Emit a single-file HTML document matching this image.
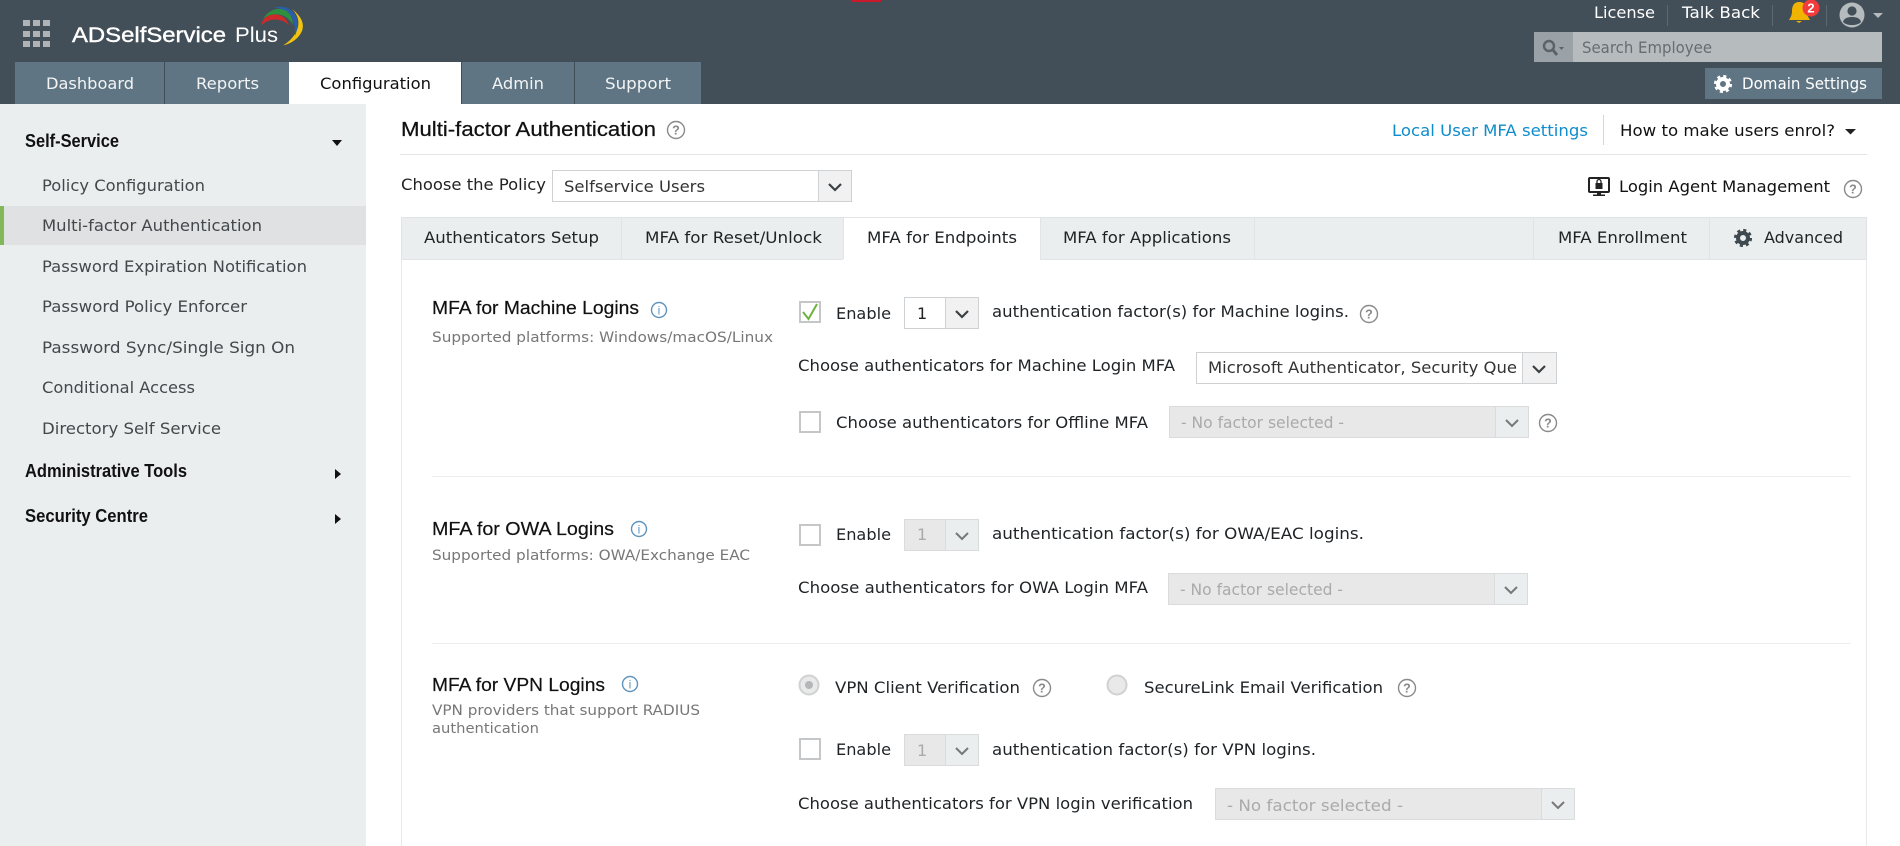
<!DOCTYPE html>
<html lang="en">
<head>
<meta charset="utf-8">
<title>ADSelfService Plus - Multi-factor Authentication</title>
<style>
html,body{margin:0;padding:0;background:#fff;width:1900px;height:846px;overflow:hidden}
svg{display:block}
text{font-family:"DejaVu Sans","Liberation Sans",sans-serif;font-size:16px;fill:#1f2326;white-space:pre}
.w{fill:#fff}
.nav{fill:#f2f4f5;font-size:16px}
.side{fill:#43484c;font-size:16px}
.head{font-family:"Liberation Sans",sans-serif;font-size:18px;font-weight:bold;fill:#111}
.title{font-family:"Liberation Sans",sans-serif;font-size:20.5px;fill:#111;stroke:#111;stroke-width:.25}
.sec{font-family:"Liberation Sans",sans-serif;font-size:18.5px;fill:#111;stroke:#111;stroke-width:.2}
.sub{font-size:14px;fill:#777}
.dis{fill:#aaa}
.lg{font-family:"Liberation Sans",sans-serif;font-size:21px;fill:#fff}
.hp{font-family:"Liberation Sans",sans-serif;font-size:12.5px;font-weight:bold;fill:#888;text-anchor:middle}
.hc{fill:none;stroke:#8a8a8a;stroke-width:1.4}
.ic{fill:none;stroke:#5f94bd;stroke-width:1.4}
.ip{font-family:"Liberation Sans",sans-serif;font-size:12px;fill:#5f94bd;text-anchor:middle}
.chev{fill:none;stroke:#3c4043;stroke-width:2.2}
.chevd{fill:none;stroke:#777;stroke-width:2}
.box{fill:#fff;stroke:#cfd2d4;stroke-width:1}
.arr{fill:#f1f1f1;stroke:#cfd2d4;stroke-width:1}
.dbox{fill:#e8e8e8;stroke:#d9dbdc;stroke-width:1}
.darr{fill:#ebeeee;stroke:#d9dbdc;stroke-width:1}
.cb{fill:#fff;stroke:#c4c6c8;stroke-width:2}
</style>
</head>
<body>
<svg width="1900" height="846" viewBox="0 0 1900 846" xmlns="http://www.w3.org/2000/svg">
<defs>
<g id="gear"><circle r="5" fill="none" stroke="currentColor" stroke-width="4"/><circle r="7.6" fill="none" stroke="currentColor" stroke-width="3" stroke-dasharray="3 2.97"/></g>
</defs>

<!-- header -->
<rect width="1900" height="104" fill="#434f58"/>
<rect x="851" y="0" width="30" height="2" fill="#c8192d"/>
<g fill="#b0b3b5">
<rect x="23" y="20" width="7" height="6"/><rect x="33" y="20" width="7" height="6"/><rect x="43" y="20" width="7" height="6"/>
<rect x="23" y="31" width="7" height="6"/><rect x="33" y="31" width="7" height="6"/><rect x="43" y="31" width="7" height="6"/>
<rect x="23" y="41" width="7" height="6"/><rect x="33" y="41" width="7" height="6"/><rect x="43" y="41" width="7" height="6"/>
</g>
<text class="lg" x="72" y="42" textLength="154" lengthAdjust="spacingAndGlyphs" style="stroke:#fff;stroke-width:.4">ADSelfService</text>
<text class="lg" x="235" y="42" textLength="43" lengthAdjust="spacingAndGlyphs">Plus</text>
<path d="M292 9Q306 20 302 31Q297 42 283 45.500Q295 38 298 27Q300 17 292 9Z" fill="#f1c40f"/>
<path d="M275 7.500Q290 4 297 18Q299 26 295 36Q296 22 289 15Q283 9 275 7.500Z" fill="#2a5ea6"/>
<path d="M263 19Q270 8 281 9Q292 11 293 25Q288 16 279 14.500Q270 13 263 19Z" fill="#2f8f3f"/>
<path d="M261 25.500Q263 16 273 14.500Q284 13.500 289 25Q282 19 274 19.500Q267 20 261 25.500Z" fill="#cf2a2a"/>

<!-- main nav -->
<rect x="15" y="62" width="149" height="42" fill="#5f7583"/>
<rect x="165" y="62" width="124" height="42" fill="#5f7583"/>
<rect x="289" y="62" width="172" height="42" fill="#fff"/>
<rect x="462" y="62" width="112" height="42" fill="#5f7583"/>
<rect x="575" y="62" width="126" height="42" fill="#5f7583"/>
<text class="nav" x="46" y="89" textLength="88" lengthAdjust="spacingAndGlyphs">Dashboard</text>
<text class="nav" x="196" y="89" textLength="63" lengthAdjust="spacingAndGlyphs">Reports</text>
<text class="nav" x="320" y="89" textLength="111" lengthAdjust="spacingAndGlyphs" style="fill:#111">Configuration</text>
<text class="nav" x="492" y="89" textLength="52" lengthAdjust="spacingAndGlyphs">Admin</text>
<text class="nav" x="605" y="89" textLength="66" lengthAdjust="spacingAndGlyphs">Support</text>

<!-- header right -->
<text class="w" x="1594" y="18" textLength="61" lengthAdjust="spacingAndGlyphs">License</text>
<rect x="1667" y="5" width="1" height="21" fill="#5c6770"/>
<text class="w" x="1682" y="18" textLength="78" lengthAdjust="spacingAndGlyphs">Talk Back</text>
<rect x="1772" y="5" width="1" height="21" fill="#5c6770"/>
<path d="M1799 2c-5 0-7 4-7 9 0 5-2 7-3 9h21c-1-2-3-4-3-9 0-5-2-9-8-9zM1796 21h6l-3 2z" fill="#f0b400"/>
<circle cx="1811" cy="8" r="8.500" fill="#f23b3b"/>
<text x="1811" y="12.500" text-anchor="middle" style="font-family:'Liberation Sans',sans-serif;font-size:13px;font-weight:bold;fill:#fff">2</text>
<rect x="1826" y="5" width="1" height="21" fill="#5c6770"/>
<circle cx="1852" cy="15" r="12.500" fill="#b6bbbe"/>
<circle cx="1852" cy="11" r="4.600" fill="#434f58"/>
<path d="M1843 22c1-4 5-5 9-5s8 1 9 5c-2 2-5 3-9 3s-7-1-9-3z" fill="#434f58"/>
<path d="M1873 13h10l-5 5z" fill="#b6bbbe"/>

<rect x="1534" y="32" width="348" height="30" fill="#b6bbbe"/>
<rect x="1534" y="32" width="39" height="30" fill="#9aa2a7"/>
<circle cx="1549" cy="46" r="5" fill="none" stroke="#5c6266" stroke-width="2.400"/>
<path d="M1553 50l4 5" stroke="#5c6266" stroke-width="3" fill="none"/>
<path d="M1559 47h5l-2.500 3z" fill="#5c6266"/>
<text x="1582" y="53" textLength="130" lengthAdjust="spacingAndGlyphs" style="fill:#676c70">Search Employee</text>

<rect x="1705" y="68" width="177" height="31" fill="#5f7583"/>
<use href="#gear" x="1723" y="84" style="color:#fff"/>
<text class="w" x="1742" y="89" textLength="125" lengthAdjust="spacingAndGlyphs">Domain Settings</text>

<!-- sidebar -->
<rect x="0" y="104" width="366" height="742" fill="#ebeeef"/>
<rect x="0" y="206" width="366" height="39" fill="#e0e1e3"/>
<rect x="0" y="206" width="4" height="39" fill="#82b85a"/>
<text class="head" x="25" y="147" textLength="94" lengthAdjust="spacingAndGlyphs">Self-Service</text>
<path d="M332 140h10l-5 6z" fill="#111"/>
<text class="side" x="42" y="191" textLength="163" lengthAdjust="spacingAndGlyphs">Policy Configuration</text>
<text class="side" x="42" y="231" textLength="220" lengthAdjust="spacingAndGlyphs">Multi-factor Authentication</text>
<text class="side" x="42" y="272" textLength="265" lengthAdjust="spacingAndGlyphs">Password Expiration Notification</text>
<text class="side" x="42" y="312" textLength="205" lengthAdjust="spacingAndGlyphs">Password Policy Enforcer</text>
<text class="side" x="42" y="353" textLength="253" lengthAdjust="spacingAndGlyphs">Password Sync/Single Sign On</text>
<text class="side" x="42" y="393" textLength="153" lengthAdjust="spacingAndGlyphs">Conditional Access</text>
<text class="side" x="42" y="434" textLength="179" lengthAdjust="spacingAndGlyphs">Directory Self Service</text>
<text class="head" x="25" y="477" textLength="162" lengthAdjust="spacingAndGlyphs">Administrative Tools</text>
<path d="M335 469v10l6-5z" fill="#111"/>
<text class="head" x="25" y="522" textLength="123" lengthAdjust="spacingAndGlyphs">Security Centre</text>
<path d="M335 514v10l6-5z" fill="#111"/>

<!-- page title row -->
<text class="title" x="401" y="136" textLength="255" lengthAdjust="spacingAndGlyphs">Multi-factor Authentication</text>
<circle class="hc" cx="676" cy="130" r="8.500"/><text class="hp" x="676" y="134.500">?</text>
<text x="1392" y="136" textLength="196" lengthAdjust="spacingAndGlyphs" style="fill:#0f8ccb">Local User MFA settings</text>
<rect x="1603" y="115" width="1" height="30" fill="#d4d6d8"/>
<text x="1620" y="136" textLength="215" lengthAdjust="spacingAndGlyphs" style="fill:#111">How to make users enrol?</text>
<path d="M1845 129h11l-5.500 5.500z" fill="#222"/>
<rect x="400" y="154" width="1467" height="1" fill="#e2e4e6"/>

<!-- policy row -->
<text x="401" y="190" textLength="145" lengthAdjust="spacingAndGlyphs" style="fill:#222">Choose the Policy</text>
<rect class="box" x="552.500" y="170.500" width="299" height="31"/>
<rect class="arr" x="818.500" y="170.500" width="33" height="31"/>
<polyline class="chev" points="829,184 835,190 841,184"/>
<text x="564" y="192" textLength="141" lengthAdjust="spacingAndGlyphs" style="fill:#333">Selfservice Users</text>

<path d="M1590 178h18a1 1 0 0 1 1 1v12a1 1 0 0 1-1 1h-18a1 1 0 0 1-1-1v-12a1 1 0 0 1 1-1z" fill="none" stroke="#222" stroke-width="2"/>
<rect x="1595.500" y="183" width="7" height="6" fill="#222"/>
<path d="M1597 183v-1.500a2 2 0 0 1 4 0v1.500" fill="none" stroke="#222" stroke-width="1.300"/>
<rect x="1597" y="193" width="4" height="2" fill="#222"/><rect x="1593" y="194.500" width="12" height="1.500" fill="#222"/>
<text x="1619" y="192" textLength="211" lengthAdjust="spacingAndGlyphs" style="fill:#111">Login Agent Management</text>
<circle class="hc" cx="1853" cy="189" r="8.500"/><text class="hp" x="1853" y="193.500">?</text>

<!-- tab strip -->
<rect x="401.500" y="217.500" width="1465" height="42" fill="#ebeeef" stroke="#e1e4e6"/>
<rect x="843" y="218" width="197" height="42" fill="#fff"/>
<rect x="621" y="218" width="1" height="41" fill="#e1e4e6"/>
<rect x="843" y="218" width="1" height="41" fill="#e1e4e6"/>
<rect x="1040" y="218" width="1" height="41" fill="#e1e4e6"/>
<rect x="1254" y="218" width="1" height="41" fill="#e1e4e6"/>
<rect x="1533" y="218" width="1" height="41" fill="#e1e4e6"/>
<rect x="1709" y="218" width="1" height="41" fill="#e1e4e6"/>
<text x="424" y="243" textLength="175" lengthAdjust="spacingAndGlyphs">Authenticators Setup</text>
<text x="645" y="243" textLength="177" lengthAdjust="spacingAndGlyphs">MFA for Reset/Unlock</text>
<text x="867" y="243" textLength="150" lengthAdjust="spacingAndGlyphs">MFA for Endpoints</text>
<text x="1063" y="243" textLength="168" lengthAdjust="spacingAndGlyphs">MFA for Applications</text>
<text x="1558" y="243" textLength="129" lengthAdjust="spacingAndGlyphs">MFA Enrollment</text>
<use href="#gear" x="1743" y="238" style="color:#3f4a50"/>
<text x="1764" y="243" textLength="79" lengthAdjust="spacingAndGlyphs">Advanced</text>

<!-- panel borders -->
<rect x="401" y="259" width="1" height="587" fill="#e6e8ea"/>
<rect x="1866" y="259" width="1" height="587" fill="#e6e8ea"/>

<!-- Machine logins -->
<text class="sec" x="432" y="314" textLength="207" lengthAdjust="spacingAndGlyphs">MFA for Machine Logins</text>
<circle class="ic" cx="659" cy="310" r="7.500"/><text class="ip" x="659" y="314.500">i</text>
<text class="sub" x="432" y="342" textLength="341" lengthAdjust="spacingAndGlyphs">Supported platforms: Windows/macOS/Linux</text>
<rect class="cb" x="800" y="302" width="20" height="20"/>
<polyline points="803,312 808.500,319 817,304" fill="none" stroke="#6cb33f" stroke-width="2"/>
<text x="836" y="319" textLength="55" lengthAdjust="spacingAndGlyphs">Enable</text>
<rect class="box" x="904.500" y="297.500" width="74" height="31"/>
<rect class="arr" x="945.500" y="297.500" width="33" height="31"/>
<polyline class="chev" points="956,311 962,317 968,311"/>
<text x="917" y="319" style="fill:#222">1</text>
<text x="992" y="317" textLength="357" lengthAdjust="spacingAndGlyphs">authentication factor(s) for Machine logins.</text>
<circle class="hc" cx="1369" cy="314" r="8.500"/><text class="hp" x="1369" y="318.500">?</text>

<text x="798" y="371" textLength="377" lengthAdjust="spacingAndGlyphs">Choose authenticators for Machine Login MFA</text>
<rect class="box" x="1196.500" y="352.500" width="360" height="31"/>
<rect class="arr" x="1522.500" y="352.500" width="34" height="31"/>
<polyline class="chev" points="1533,366 1539,372 1545,366"/>
<text x="1208" y="373" textLength="309" lengthAdjust="spacingAndGlyphs" style="fill:#333">Microsoft Authenticator, Security Que</text>

<rect class="cb" x="800" y="412" width="20" height="20"/>
<text x="836" y="428" textLength="312" lengthAdjust="spacingAndGlyphs">Choose authenticators for Offline MFA</text>
<rect class="dbox" x="1169.500" y="406.500" width="359" height="31"/>
<rect class="darr" x="1495.500" y="406.500" width="33" height="31"/>
<polyline class="chevd" points="1506,420 1512,426 1518,420"/>
<text class="dis" x="1181" y="428" textLength="163" lengthAdjust="spacingAndGlyphs">- No factor selected -</text>
<circle class="hc" cx="1548" cy="423" r="8.500"/><text class="hp" x="1548" y="427.500">?</text>

<rect x="432" y="476" width="1419" height="1" fill="#eceef0"/>

<!-- OWA logins -->
<text class="sec" x="432" y="535" textLength="182" lengthAdjust="spacingAndGlyphs">MFA for OWA Logins</text>
<circle class="ic" cx="639" cy="529" r="7.500"/><text class="ip" x="639" y="533.500">i</text>
<text class="sub" x="432" y="560" textLength="318" lengthAdjust="spacingAndGlyphs">Supported platforms: OWA/Exchange EAC</text>
<rect class="cb" x="800" y="525" width="20" height="20"/>
<text x="836" y="540" textLength="55" lengthAdjust="spacingAndGlyphs">Enable</text>
<rect class="dbox" x="904.500" y="519.500" width="74" height="31"/>
<rect class="darr" x="945.500" y="519.500" width="33" height="31"/>
<polyline class="chevd" points="956,533 962,539 968,533"/>
<text class="dis" x="917" y="540">1</text>
<text x="992" y="539" textLength="372" lengthAdjust="spacingAndGlyphs">authentication factor(s) for OWA/EAC logins.</text>
<text x="798" y="593" textLength="350" lengthAdjust="spacingAndGlyphs">Choose authenticators for OWA Login MFA</text>
<rect class="dbox" x="1168.500" y="573.500" width="359" height="31"/>
<rect class="darr" x="1494.500" y="573.500" width="33" height="31"/>
<polyline class="chevd" points="1505,587 1511,593 1517,587"/>
<text class="dis" x="1180" y="595" textLength="163" lengthAdjust="spacingAndGlyphs">- No factor selected -</text>

<rect x="432" y="643" width="1419" height="1" fill="#eceef0"/>

<!-- VPN logins -->
<text class="sec" x="432" y="691" textLength="173" lengthAdjust="spacingAndGlyphs">MFA for VPN Logins</text>
<circle class="ic" cx="630" cy="684" r="7.500"/><text class="ip" x="630" y="688.500">i</text>
<text class="sub" x="432" y="715" textLength="268" lengthAdjust="spacingAndGlyphs">VPN providers that support RADIUS</text>
<text class="sub" x="432" y="733" textLength="107" lengthAdjust="spacingAndGlyphs">authentication</text>
<circle cx="809" cy="685" r="9.500" fill="#e9e9e9" stroke="#cfd1d2" stroke-width="2"/>
<circle cx="809" cy="685" r="4" fill="#b4b6b8"/>
<text x="835" y="693" textLength="185" lengthAdjust="spacingAndGlyphs">VPN Client Verification</text>
<circle class="hc" cx="1042" cy="688" r="8.500"/><text class="hp" x="1042" y="692.500">?</text>
<circle cx="1117" cy="685" r="9.500" fill="#e9e9e9" stroke="#cfd1d2" stroke-width="2"/>
<text x="1144" y="693" textLength="239" lengthAdjust="spacingAndGlyphs">SecureLink Email Verification</text>
<circle class="hc" cx="1407" cy="688" r="8.500"/><text class="hp" x="1407" y="692.500">?</text>

<rect class="cb" x="800" y="739" width="20" height="20"/>
<text x="836" y="755" textLength="55" lengthAdjust="spacingAndGlyphs">Enable</text>
<rect class="dbox" x="904.500" y="734.500" width="74" height="31"/>
<rect class="darr" x="945.500" y="734.500" width="33" height="31"/>
<polyline class="chevd" points="956,748 962,754 968,748"/>
<text class="dis" x="917" y="756">1</text>
<text x="992" y="755" textLength="324" lengthAdjust="spacingAndGlyphs">authentication factor(s) for VPN logins.</text>
<text x="798" y="809" textLength="395" lengthAdjust="spacingAndGlyphs">Choose authenticators for VPN login verification</text>
<rect class="dbox" x="1215.500" y="788.500" width="359" height="31"/>
<rect class="darr" x="1541.500" y="788.500" width="33" height="31"/>
<polyline class="chevd" points="1552,802 1558,808 1564,802"/>
<text class="dis" x="1227" y="811" textLength="176" lengthAdjust="spacingAndGlyphs">- No factor selected -</text>
</svg>
</body>
</html>
